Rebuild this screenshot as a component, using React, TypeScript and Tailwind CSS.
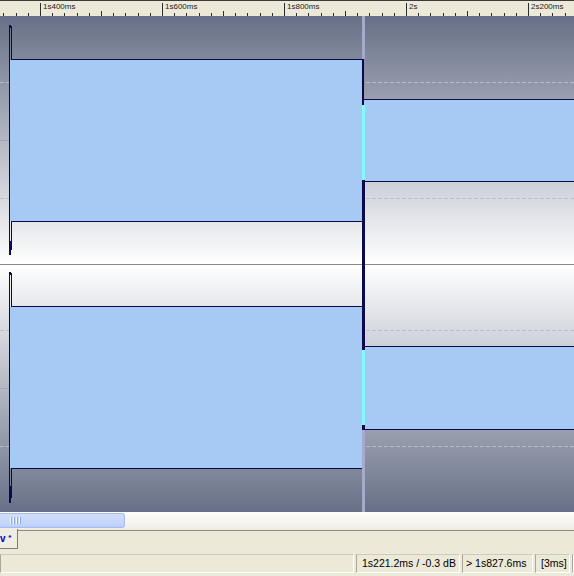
import React from 'react';

const LABELS = [
  { x: 40, text: '1s400ms' },
  { x: 162, text: '1s600ms' },
  { x: 284, text: '1s800ms' },
  { x: 406, text: '2s' },
  { x: 528, text: '2s200ms' },
];

const NAVY = '#0b0b4c';
const BLUE = '#a6caf4';
const CYAN = '#86f8ff';
const LAVENDER = '#a7abcb';

function Ruler() {
  const ticks = [];
  for (let i = -4; i <= 44; i++) {
    const x = Math.round(40 + 12.2 * i) + 0.5;
    const kind = ((i % 10) + 10) % 10;
    const y1 = kind === 0 ? 2 : kind === 5 ? 10 : 12;
    ticks.push(<line key={i} x1={x} x2={x} y1={y1} y2={15} stroke="#2e2e2e" />);
  }
  return (
    <div className="relative h-[16px] shrink-0 border-t border-[#3a3a3a] bg-[#ECE9D8]">
      <svg className="absolute left-0 top-0" width={574} height={15} shapeRendering="crispEdges">
        {ticks}
      </svg>
      {LABELS.map((l) => (
        <span
          key={l.text}
          className="absolute top-[2px] text-[8px] leading-[8px] text-[#1c1c1c] font-['Liberation_Sans',Arial,sans-serif]"
          style={{ left: l.x + 3 }}
        >
          {l.text}
        </span>
      ))}
    </div>
  );
}

function Waveform() {
  return (
    <svg width={574} height={496} className="block shrink-0" shapeRendering="crispEdges">
      <defs>
        <linearGradient id="ch1" x1="0" y1="0" x2="0" y2="1">
          <stop offset="0" stopColor="#677087" />
          <stop offset="1" stopColor="#ffffff" />
        </linearGradient>
        <linearGradient id="ch2" x1="0" y1="0" x2="0" y2="1">
          <stop offset="0" stopColor="#ffffff" />
          <stop offset="1" stopColor="#677087" />
        </linearGradient>
      </defs>

      {/* backgrounds */}
      <rect x={0} y={0} width={574} height={248} fill="url(#ch1)" />
      <rect x={0} y={249} width={574} height={247} fill="url(#ch2)" />
      <line x1={0} x2={574} y1={248.5} y2={248.5} stroke="#8a8a8a" />

      {/* -6 dB guides */}
      {[66, 182, 314, 430].map((y) => (
        <line key={y} x1={0} x2={574} y1={y + 0.5} y2={y + 0.5} stroke="#babcc8" strokeDasharray="4 2" />
      ))}
      <line x1={0} x2={9} y1={124.5} y2={124.5} stroke="#a3a7b8" />
      <line x1={0} x2={9} y1={372.5} y2={372.5} stroke="#a3a7b8" />

      {/* left section */}
      <rect x={10} y={44} width={352} height={161} fill={BLUE} />
      <rect x={10} y={291} width={352} height={161} fill={BLUE} />
      <g stroke={NAVY} fill="none">
        <line x1={12} x2={362} y1={43.5} y2={43.5} />
        <line x1={12} x2={362} y1={205.5} y2={205.5} />
        <line x1={12} x2={362} y1={290.5} y2={290.5} />
        <line x1={12} x2={362} y1={452.5} y2={452.5} />
        <line x1={9.5} x2={9.5} y1={9} y2={239} />
        <line x1={10.5} x2={10.5} y1={9} y2={12} />
        <line x1={11.5} x2={11.5} y1={10} y2={44} />
        <line x1={11.5} x2={11.5} y1={205} y2={234} />
        <line x1={10.5} x2={10.5} y1={225} y2={239} />
        <line x1={9.5} x2={9.5} y1={256} y2={487} />
        <line x1={10.5} x2={10.5} y1={256} y2={259} />
        <line x1={11.5} x2={11.5} y1={257} y2={291} />
        <line x1={11.5} x2={11.5} y1={452} y2={482} />
        <line x1={10.5} x2={10.5} y1={470} y2={487} />
      </g>

      {/* right section */}
      <rect x={364} y={83} width={210} height={82} fill={BLUE} />
      <rect x={364} y={331} width={210} height={82} fill={BLUE} />
      <g stroke={NAVY} fill="none">
        <line x1={363} x2={574} y1={83.5} y2={83.5} />
        <line x1={363} x2={574} y1={165.5} y2={165.5} />
        <line x1={363} x2={574} y1={330.5} y2={330.5} />
        <line x1={363} x2={574} y1={413.5} y2={413.5} />
      </g>

      {/* cursor */}
      <rect x={362} y={0} width={3} height={43} fill={LAVENDER} />
      <rect x={362} y={43} width={2} height={46} fill={NAVY} />
      <rect x={362} y={89} width={3} height={75} fill={CYAN} />
      <rect x={362} y={164} width={3} height={170} fill={NAVY} />
      <rect x={362} y={334} width={3} height={75} fill={CYAN} />
      <rect x={362} y={409} width={3} height={5} fill={NAVY} />
      <rect x={362} y={414} width={3} height={82} fill={LAVENDER} />
    </svg>
  );
}

function Scrollbar() {
  return (
    <div className="h-[17px] shrink-0 py-[1px] bg-gradient-to-b from-[#fefefc] to-[#f1efe6]">
      <div className="flex h-full w-[125px] items-center gap-[1px] rounded-r-[3px] border border-l-0 border-[#a6bcee] bg-gradient-to-b from-[#d3e0fd] to-[#bccff9] pl-[10px]">
        {[0, 1, 2, 3].map((i) => (
          <div key={i} className="flex h-[7px]">
            <div className="w-[1px] bg-[#f0f4ff]" />
            <div className="w-[1px] bg-[#8ea6e0]" />
          </div>
        ))}
      </div>
    </div>
  );
}

function TabStrip() {
  return (
    <div className="flex h-[21px] shrink-0 bg-[#ECE9D8]">
      <div className="flex h-[20px] w-[18px] items-center whitespace-nowrap border-b border-r border-[#7c7c7c] bg-[#EFEDE2] text-[10px] font-bold leading-none text-[#0000c8] font-['Liberation_Sans',Arial,sans-serif]">
        <span>
          v <span className="text-[8px] align-top">*</span>
        </span>
      </div>
      <div className="mt-[1px] h-0 flex-1 border-t border-[#8c8c8c]" />
    </div>
  );
}

function StatusBar() {
  const pane = 'h-[19px] flex items-center border-l border-t border-l-[#aca899] border-t-[#cfcbbd] border-b border-r border-b-white border-r-white';
  return (
    <div className="flex h-[26px] shrink-0 gap-[2px] bg-[#ECE9D8] pt-[4px] text-[10.5px] text-black font-['Liberation_Sans',Arial,sans-serif]">
      <div className={`${pane} flex-1`} />
      <div className={`${pane} w-[104px] pl-[5px]`}>1s221.2ms / -0.3 dB</div>
      <div className={`${pane} w-[71px] pl-[3px]`}>&gt; 1s827.6ms</div>
      <div className={`${pane} w-[35px] pl-[5px]`}>[3ms]</div>
      <div className={`${pane} w-[2px]`} />
    </div>
  );
}

export default function App() {
  return (
    <div className="flex h-[576px] w-[574px] flex-col overflow-hidden bg-[#ECE9D8]">
      <Ruler />
      <Waveform />
      <Scrollbar />
      <TabStrip />
      <StatusBar />
    </div>
  );
}
